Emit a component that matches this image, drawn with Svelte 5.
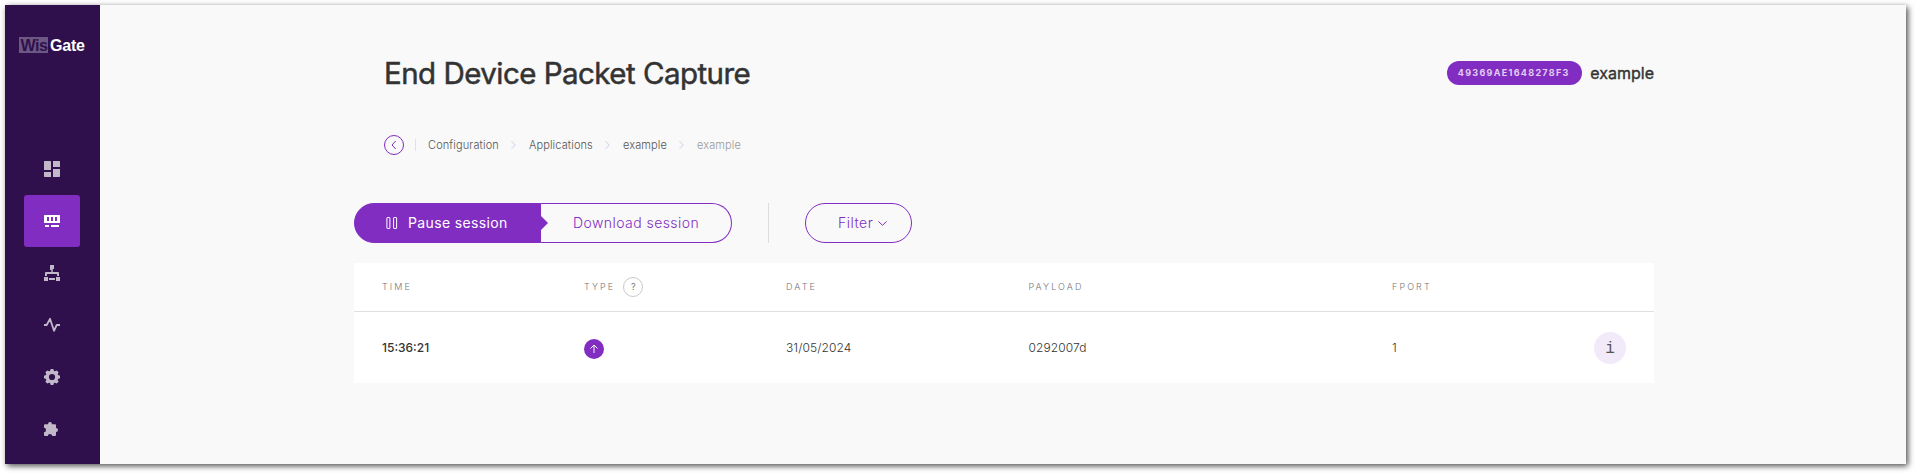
<script>
  const crumbs = ['Configuration', 'Applications', 'example', 'example'];
  const rows = [{ time: '15:36:21', date: '31/05/2024', payload: '0292007d', fport: 1 }];
</script>

<div class="page">
<div class="app">
  <aside>
    <div class="logo"><span class="wis">Wis</span><span class="gate">Gate</span></div>
    <nav>
      <a class="item" aria-label="Dashboard">
        <svg width="16" height="16" viewBox="0 0 16 16"><path d="M0 .7Q0 0 .7 0H6.3Q7 0 7 .7V9H0zM9 0h6.3q.7 0 .7.7V6H9zM0 11h7v5H.7Q0 16 0 15.300zM9 8h7v7.300q0 .7-.7.7H9z" /></svg>
      </a>
      <a class="item active" aria-label="Configuration">
        <svg width="16" height="16" viewBox="0 0 16 16"><path fill-rule="evenodd" d="M.7 2H15.300Q16 2 16 2.700V10H0V2.700Q0 2 .7 2zM3 4v4h2V4zM7 4v4h2V4zM11 4v4h2V4zM1 12h4v2H1zM7 12h8v2H7z" /></svg>
      </a>
      <a class="item" aria-label="Network">
        <svg width="16" height="16" viewBox="0 0 16 16"><path d="M6 0h4v4H8.700v1H6V4zM7.300 4h1.400v3H14q1 0 1 1v3h-2V9H3v2H1V8q0-1 1-1h5.300zM0 12h4v4H0zM5 13h6v2H5zM12 12h4v4h-4z" /></svg>
      </a>
      <a class="item" aria-label="Diagnostics">
        <svg width="16" height="16" viewBox="0 0 16 16"><path d="M0 8h2.700L6 1.800l4 12L12.700 8H16" fill="none" stroke="currentColor" stroke-width="1.800" stroke-linejoin="round" /></svg>
      </a>
      <a class="item" aria-label="Settings">
        <svg width="16" height="16" viewBox="0 0 16 16"><path fill-rule="evenodd" d="M6.700 0h2.600l.7 2 .8.300 2-.9 1.800 1.800-.9 2 .3.800 2 .7v2.600l-2 .7-.3.800.9 2-1.800 1.800-2-.9-.8.300-.7 2H6.700L6 14l-.8-.3-2 .9-1.800-1.800.9-2L2 10 0 9.300V6.700L2 6l.3-.8-.9-2 1.800-1.800 2 .9L6 2zM8 4.900a3.100 3.100 0 1 0 0 6.200a3.100 3.100 0 1 0 0-6.200z" /></svg>
      </a>
      <a class="item" aria-label="Extensions">
        <svg width="16" height="16" viewBox="0 -1 16 16"><path d="M0 3.300Q0 2.300 1 2.300H4Q4 0 6 0T8 2.300H11Q12 2.300 12 3.300V6Q14 6 14 8T12 10V13Q12 14 11 14H8.200Q8.200 11.900 6 11.900T3.800 14H1Q0 14 0 13V10.200Q2 10.200 2 8T0 5.800z" /></svg>
      </a>
    </nav>
  </aside>

  <main>
    <header>
      <h1>End Device Packet Capture</h1>
      <div class="device"><span class="badge">49369AE1648278F3</span><span class="name">example</span></div>
    </header>

    <div class="crumbs">
      <svg class="back" width="20" height="20" viewBox="0 0 20 20" fill="none"><circle cx="10" cy="10" r="9.500" /><path d="M11.700 6L8 10l3.700 4" /></svg>
      <i class="bar"></i>
      {#each crumbs as crumb, i}
        {#if i > 0}
          <svg class="sep" width="5" height="8" viewBox="0 0 5 8" fill="none"><path d="M.5.2L4.300 4 .5 7.800" /></svg>
        {/if}
        <span class:last={i === crumbs.length - 1}>{crumb}</span>
      {/each}
    </div>

    <div class="actions">
      <button class="pause">
        <svg width="12" height="12" viewBox="0 0 12 12" fill="none" stroke="currentColor"><rect x=".9" y=".5" width="3" height="11" rx=".5" /><rect x="7.600" y=".5" width="3" height="11" rx=".5" /></svg>
        <span>Pause session</span>
      </button>
      <button class="download"><span>Download session</span></button>
      <i class="divider"></i>
      <button class="filter">
        <span>Filter</span>
        <svg width="9" height="5" viewBox="0 0 9 5" fill="none" stroke="currentColor"><path d="M.4.4L4.500 4.300 8.600.4" /></svg>
      </button>
    </div>

    <section class="table">
      <div class="row head">
        <span>TIME</span>
        <span class="type">TYPE <b>?</b></span>
        <span>DATE</span>
        <span>PAYLOAD</span>
        <span>FPORT</span>
        <span></span>
      </div>
      {#each rows as row}
        <div class="row body">
          <span class="time">{row.time}</span>
          <span class="direction">
            <svg width="20" height="20" viewBox="0 0 20 20"><circle cx="10" cy="10" r="10" fill="#822dc2" /><path d="M10 14V6.500" stroke="#d1afe9" stroke-width="1.500" /><path d="M6.500 9.500L10 6l3.500 3.500" fill="none" stroke="#fff" /></svg>
          </span>
          <span>{row.date}</span>
          <span>{row.payload}</span>
          <span>{row.fport}</span>
          <span class="info">i</span>
        </div>
      {/each}
    </section>
  </main>
</div>
</div>

<style>
  :global(body) {
    background: #fff;
  }
  .page {
    box-sizing: border-box;
    width: 1915px;
    height: 473px;
    padding: 5px 0 0 5px;
    overflow: hidden;
  }
  .app {
    display: flex;
    width: 1901px;
    height: 459px;
    background: #f9f9f9;
    box-shadow: 2px 2px 6px rgba(0, 0, 0, 0.7);
    font-family: Inter, sans-serif;
    color: #333;
  }
  aside {
    width: 95px;
    background: #2f104d;
    flex: none;
  }
  .logo {
    display: flex;
    align-items: center;
    gap: 2px;
    height: 16px;
    margin: 32px 0 0 14px;
    font: bold 16px/17px "Liberation Sans", sans-serif;
    letter-spacing: -0.5px;
  }
  .wis {
    box-sizing: border-box;
    width: 29px;
    height: 16px;
    padding-left: 1.500px;
    background: #6d5783;
    color: #2f104d;
  }
  .gate {
    color: #fff;
    letter-spacing: -0.2px;
  }
  nav {
    margin-top: 90px;
  }
  .item {
    display: flex;
    align-items: center;
    justify-content: center;
    width: 56px;
    height: 52px;
    margin-left: 19px;
    border-radius: 3px;
    color: #c1b8ca;
  }
  .item svg {
    fill: currentColor;
  }
  .active {
    background: #822dc2;
    color: #fff;
  }
  main {
    width: 1300px;
    margin-left: 254px;
  }
  header {
    display: flex;
    align-items: center;
    justify-content: space-between;
    height: 40px;
    margin: 48px 0 0 30px;
  }
  h1 {
    margin: 0;
    font-size: 29.500px;
    font-weight: 400;
    letter-spacing: -0.53px;
    line-height: 40px;
    -webkit-text-stroke: 0.5px #333;
  }
  .device {
    display: flex;
    align-items: center;
    gap: 8.500px;
  }
  .badge {
    box-sizing: border-box;
    width: 135px;
    height: 24px;
    border-radius: 12px;
    background: #822dc2;
    color: #e3cdf3;
    font-size: 9px;
    font-weight: 700;
    line-height: 23px;
    letter-spacing: 1.300px;
    padding-left: 11px;
  }
  .name {
    font-size: 16px;
    font-weight: 400;
    letter-spacing: 0;
    -webkit-text-stroke: 0.4px #333;
  }
  .crumbs {
    display: flex;
    align-items: center;
    height: 20px;
    margin: 42px 0 0 30px;
    font-size: 11px;
    font-weight: 300;
    letter-spacing: 0.12px;
    color: #555;
  }
  .back {
    stroke: #822dc2;
  }
  .bar {
    width: 1px;
    height: 12px;
    margin: 0 12px 0 11px;
    background: #e6dcef;
  }
  .sep {
    margin: 0 13px 0 12px;
    stroke: #d9c8e8;
  }
  .last {
    color: #999;
  }
  .actions {
    display: flex;
    align-items: center;
    height: 40px;
    margin-top: 48px;
  }
  button {
    box-sizing: border-box;
    display: flex;
    align-items: center;
    height: 40px;
    margin: 0;
    padding: 0;
    border: 1px solid #822dc2;
    background: transparent;
    color: #822dc2;
    font: 300 14px Inter, sans-serif;
    letter-spacing: 0.5px;
  }
  button span {
    padding-bottom: 1px;
  }
  .pause {
    position: relative;
    width: 187px;
    padding-left: 31px;
    gap: 10px;
    border-radius: 20px 0 0 20px;
    background: #822dc2;
    color: #fff;
    font-weight: 400;
    letter-spacing: 0.36px;
  }
  .pause::after {
    content: "";
    position: absolute;
    left: 186px;
    top: 12px;
    border: 7px solid transparent;
    border-right: 0;
    border-left-color: #822dc2;
  }
  .download {
    width: 191px;
    padding-left: 32px;
    border-left: 0;
    border-radius: 0 20px 20px 0;
    letter-spacing: 0.44px;
  }
  .divider {
    width: 1px;
    height: 40px;
    margin: 0 36px;
    background: #ddd;
  }
  .filter {
    width: 107px;
    padding-left: 32px;
    gap: 4.500px;
    border-radius: 20px;
  }
  .table {
    margin-top: 20px;
    background: #fff;
  }
  .row {
    display: grid;
    grid-template-columns: 202px 202px 242.500px 363.500px 202px 32px;
    align-items: center;
    padding-left: 28px;
  }
  .head {
    height: 48px;
    border-bottom: 1px solid #e0e0e0;
    color: #777;
    font-size: 9px;
    font-weight: 300;
    letter-spacing: 2.100px;
    line-height: 12px;
  }
  .head span {
    padding-bottom: 1px;
  }
  .head .type {
    display: flex;
    align-items: center;
    gap: 8px;
    padding: 0;
    line-height: 10px;
  }
  .type b {
    box-sizing: border-box;
    width: 20px;
    height: 20px;
    border: 1px solid #c9c9c9;
    border-radius: 50%;
    color: #777;
    font-size: 9px;
    line-height: 18px;
    letter-spacing: 0;
    text-align: center;
  }
  .body {
    height: 71px;
    font-size: 12px;
    font-weight: 300;
    letter-spacing: 0.1px;
  }
  .time {
    font-weight: 500;
    letter-spacing: 0;
  }
  .direction {
    display: flex;
    padding-top: 2px;
  }
  .info {
    width: 32px;
    height: 32px;
    border-radius: 50%;
    background: #f2e9f9;
    color: #555;
    font: 16px/35px "Liberation Mono", monospace;
    letter-spacing: 0;
    text-align: center;
  }
</style>
